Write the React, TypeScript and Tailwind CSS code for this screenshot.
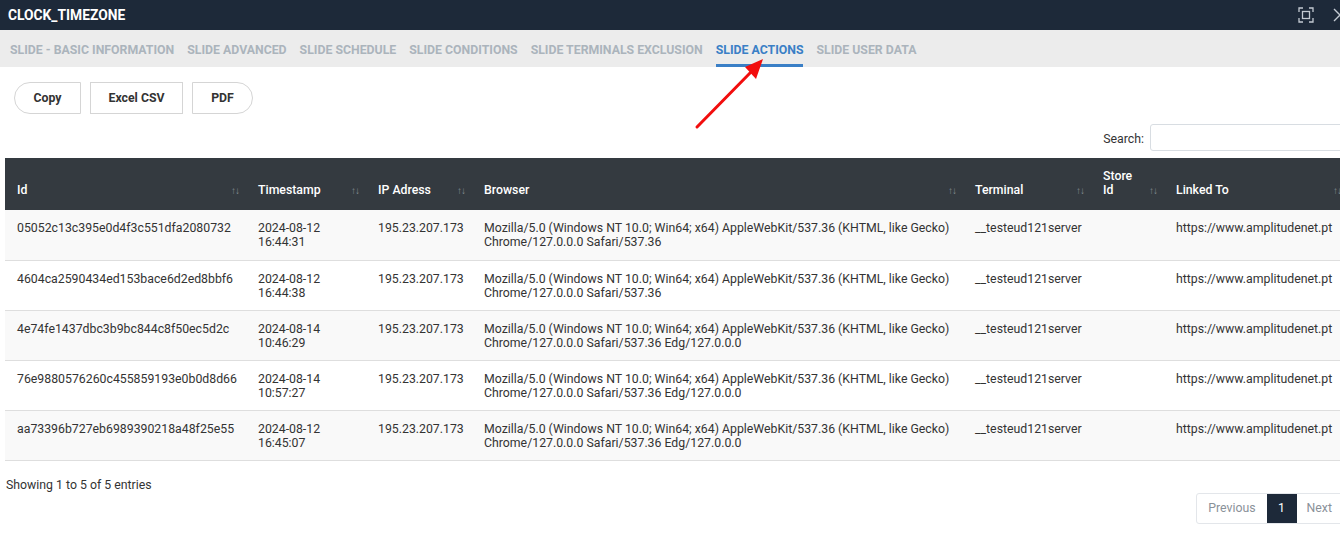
import React from "react";

type Row = {
  id: string;
  date: string;
  time: string;
  ip: string;
  browser: [string, string];
  terminal: string;
  storeId: string;
  linked: string;
};

const ua1 = "Mozilla/5.0 (Windows NT 10.0; Win64; x64) AppleWebKit/537.36 (KHTML, like Gecko)";

const rows: Row[] = [
  { id: "05052c13c395e0d4f3c551dfa2080732", date: "2024-08-12", time: "16:44:31", ip: "195.23.207.173", browser: [ua1, "Chrome/127.0.0.0 Safari/537.36"], terminal: "__testeud121server", storeId: "", linked: "https://www.amplitudenet.pt" },
  { id: "4604ca2590434ed153bace6d2ed8bbf6", date: "2024-08-12", time: "16:44:38", ip: "195.23.207.173", browser: [ua1, "Chrome/127.0.0.0 Safari/537.36"], terminal: "__testeud121server", storeId: "", linked: "https://www.amplitudenet.pt" },
  { id: "4e74fe1437dbc3b9bc844c8f50ec5d2c", date: "2024-08-14", time: "10:46:29", ip: "195.23.207.173", browser: [ua1, "Chrome/127.0.0.0 Safari/537.36 Edg/127.0.0.0"], terminal: "__testeud121server", storeId: "", linked: "https://www.amplitudenet.pt" },
  { id: "76e9880576260c455859193e0b0d8d66", date: "2024-08-14", time: "10:57:27", ip: "195.23.207.173", browser: [ua1, "Chrome/127.0.0.0 Safari/537.36 Edg/127.0.0.0"], terminal: "__testeud121server", storeId: "", linked: "https://www.amplitudenet.pt" },
  { id: "aa73396b727eb6989390218a48f25e55", date: "2024-08-12", time: "16:45:07", ip: "195.23.207.173", browser: [ua1, "Chrome/127.0.0.0 Safari/537.36 Edg/127.0.0.0"], terminal: "__testeud121server", storeId: "", linked: "https://www.amplitudenet.pt" },
];

const tabs = [
  "Slide - Basic Information",
  "Slide Advanced",
  "Slide Schedule",
  "Slide Conditions",
  "Slide Terminals Exclusion",
  "Slide Actions",
  "Slide User Data",
];

const columns: { label: React.ReactNode; width: string }[] = [
  { label: "Id", width: "w-[243px]" },
  { label: "Timestamp", width: "w-[120px]" },
  { label: "IP Adress", width: "w-[106px]" },
  { label: "Browser", width: "w-[491px]" },
  { label: "Terminal", width: "w-[128px]" },
  { label: <>Store<br />Id</>, width: "w-[73px]" },
  { label: "Linked To", width: "w-[184px]" },
];

function SortIcon() {
  return (
    <span className="absolute right-[9px] bottom-[14px] text-[10px] leading-none tracking-[-1px] text-[#868c93]">
      ↑↓
    </span>
  );
}

function MaximizeIcon() {
  return (
    <svg width="16" height="16" viewBox="0 0 16 16" fill="none" stroke="#c3cad2" strokeWidth="1.3">
      <path d="M1 5V1h4M11 1h4v4M15 11v4h-4M5 15H1v-4" />
      <rect x="4.5" y="4.5" width="7" height="7" />
    </svg>
  );
}

function CloseIcon() {
  return (
    <svg width="14" height="14" viewBox="0 0 14 14" stroke="#c3cad2" strokeWidth="1.4">
      <path d="M1 1l12 12M13 1L1 13" />
    </svg>
  );
}

export default function App() {
  return (
    <div className="relative w-[1340px] h-[539px] overflow-hidden bg-white font-['Roboto',sans-serif] text-[#333]">
      {/* title bar */}
      <div className="h-[30px] bg-[#1d2939] flex items-center justify-between pl-2">
        <span className="text-white text-[13.8px] font-bold">CLOCK_TIMEZONE</span>
        <div className="flex items-center gap-[19px] mr-[-7px]">
          <MaximizeIcon />
          <CloseIcon />
        </div>
      </div>

      {/* tabs */}
      <div className="h-[37px] bg-[#ececec] flex items-stretch gap-[13px] pl-[10px]">
        {tabs.map((t) => {
          const active = t === "Slide Actions";
          return (
            <div
              key={t}
              className={`flex items-center uppercase text-[12.3px] font-bold border-b-[3px] pt-[7px] ${
                active ? "text-[#3a7fc6] border-[#3a7fc6]" : "text-[#abb4bc] border-transparent"
              }`}
            >
              {t}
            </div>
          );
        })}
      </div>

      {/* export buttons */}
      <div className="flex gap-[9px] pl-[14px] pt-[15px]">
        <button className="h-[32px] w-[67px] border border-[#d5d5d5] rounded-l-full text-[12.3px] font-bold text-[#333] bg-white">
          Copy
        </button>
        <button className="h-[32px] w-[93px] border border-[#d5d5d5] text-[12.3px] font-bold text-[#333] bg-white">
          Excel CSV
        </button>
        <button className="h-[32px] w-[61px] border border-[#d5d5d5] rounded-r-full text-[12.3px] font-bold text-[#333] bg-white">
          PDF
        </button>
      </div>

      {/* search */}
      <div className="flex justify-end items-center gap-[6px] mt-[10px] mr-[-10px]">
        <span className="text-[12.3px] text-[#333] pt-[3px]">Search:</span>
        <input className="h-[27px] w-[200px] border border-[#d8dde2] rounded-[3px] outline-none" />
      </div>

      {/* table */}
      <table className="table-fixed border-collapse ml-[5px] mt-[7px] w-[1345px] text-[12.3px]">
        <thead>
          <tr className="bg-[#343a40] text-white h-[52px]">
            {columns.map((c, i) => (
              <th
                key={i}
                className={`${c.width} relative align-bottom text-left font-medium leading-[14px] pb-[13px] pr-[24px] ${
                  i === 0 ? "pl-[12px]" : "pl-[10px]"
                }`}
              >
                {c.label}
                <SortIcon />
              </th>
            ))}
          </tr>
        </thead>
        <tbody>
          {rows.map((r, i) => (
            <tr key={r.id} className={`h-[50px] border-b border-[#dedede] ${i % 2 === 0 ? "bg-[#f9f9f9]" : "bg-white"}`}>
              <td className="align-top pt-[11px] pl-[12px] leading-[14px]">{r.id}</td>
              <td className="align-top pt-[11px] pl-[10px] leading-[14px]">
                {r.date}
                <br />
                {r.time}
              </td>
              <td className="align-top pt-[11px] pl-[10px] leading-[14px]">{r.ip}</td>
              <td className="align-top pt-[11px] pl-[10px] leading-[14px] whitespace-nowrap">
                {r.browser[0]}
                <br />
                {r.browser[1]}
              </td>
              <td className="align-top pt-[11px] pl-[10px] leading-[14px]">{r.terminal}</td>
              <td className="align-top pt-[11px] pl-[10px] leading-[14px]">{r.storeId}</td>
              <td className="align-top pt-[11px] pl-[10px] leading-[14px] whitespace-nowrap">{r.linked}</td>
            </tr>
          ))}
        </tbody>
      </table>

      {/* footer */}
      <div className="pl-[6px] pt-[17px] text-[12.3px] leading-[14px] text-[#333]">Showing 1 to 5 of 5 entries</div>
      <div className="flex justify-end mt-[1px] mr-[-3px]">
        <div className="flex h-[31px] text-[12.3px] border border-[#e3e6ea] rounded-l-[3px]">
          <span className="flex items-center px-[11px] text-[#8a9199]">Previous</span>
          <span className="flex items-center justify-center w-[30px] bg-[#1d2939] text-white">1</span>
          <span className="flex items-center px-[10px] text-[#8a9199]">Next</span>
        </div>
      </div>

      {/* annotation arrow */}
      <svg className="absolute left-0 top-0 pointer-events-none" width="1340" height="539">
        <line x1="697" y1="127" x2="752" y2="71" stroke="#f20d0d" strokeWidth="3" strokeLinecap="round" />
        <polygon points="763,59 745,67 756,79" fill="#f20d0d" />
      </svg>
    </div>
  );
}
